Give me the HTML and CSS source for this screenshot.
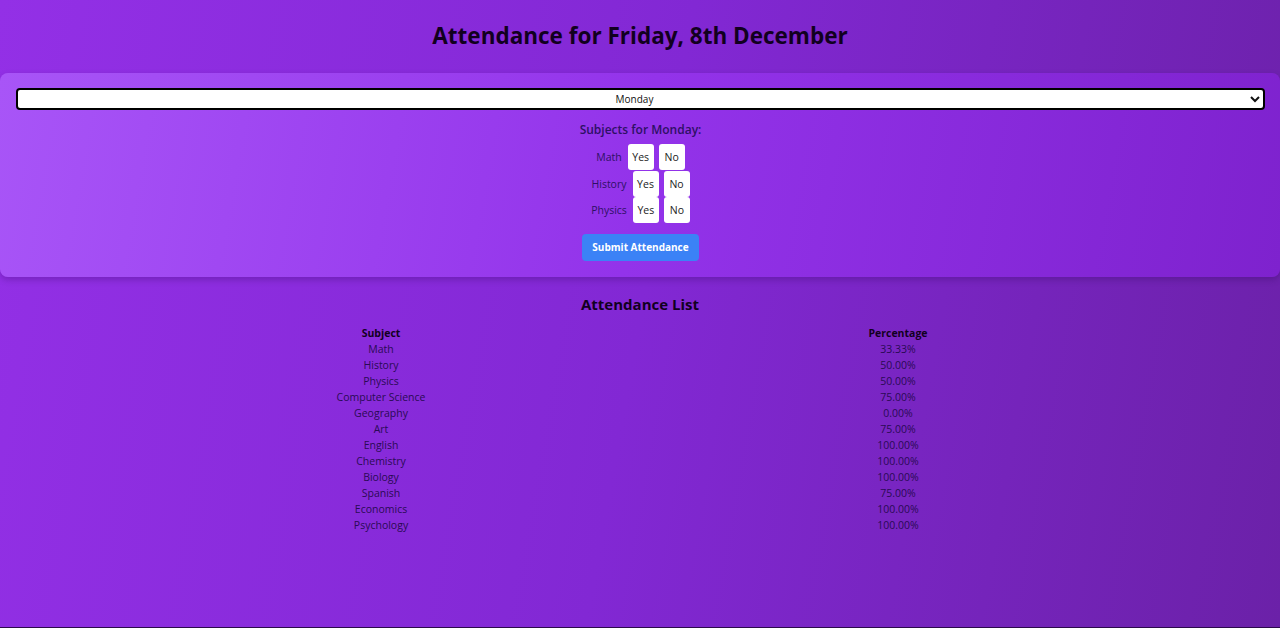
FILE: index.html
```html
<!DOCTYPE html>
<html lang="en">
<head>
<meta charset="utf-8">
<title>Attendance</title>
<link rel="stylesheet" href="styles.css">
</head>
<body>
<div class="page">
  <h1 class="title">Attendance for Friday, 8th December</h1>
  <section class="card">
    <select class="day-select">
      <option selected>Monday</option>
      <option>Tuesday</option>
      <option>Wednesday</option>
      <option>Thursday</option>
      <option>Friday</option>
    </select>
    <h2 class="subtitle">Subjects for Monday:</h2>
    <div class="rows">
      <div class="row"><span class="label">Math</span><button class="opt">Yes</button><button class="opt">No</button></div>
      <div class="row"><span class="label">History</span><button class="opt">Yes</button><button class="opt">No</button></div>
      <div class="row"><span class="label">Physics</span><button class="opt">Yes</button><button class="opt">No</button></div>
    </div>
    <button class="submit">Submit Attendance</button>
  </section>
  <h2 class="list-title">Attendance List</h2>
  <table class="list">
    <thead>
      <tr><th class="col-subject">Subject</th><th>Percentage</th></tr>
    </thead>
    <tbody>
      <tr><td>Math</td><td>33.33%</td></tr>
      <tr><td>History</td><td>50.00%</td></tr>
      <tr><td>Physics</td><td>50.00%</td></tr>
      <tr><td>Computer Science</td><td>75.00%</td></tr>
      <tr><td>Geography</td><td>0.00%</td></tr>
      <tr><td>Art</td><td>75.00%</td></tr>
      <tr><td>English</td><td>100.00%</td></tr>
      <tr><td>Chemistry</td><td>100.00%</td></tr>
      <tr><td>Biology</td><td>100.00%</td></tr>
      <tr><td>Spanish</td><td>75.00%</td></tr>
      <tr><td>Economics</td><td>100.00%</td></tr>
      <tr><td>Psychology</td><td>100.00%</td></tr>
    </tbody>
  </table>
</div>
</body>
</html>
```

FILE: styles.css
```css
* { box-sizing: border-box; }

html, body {
  margin: 0;
  padding: 0;
}

body {
  font-family: "Open Sans", "Noto Sans", sans-serif;
  background: linear-gradient(100deg, #9330e6 0%, #8228d4 50%, #6b21a8 100%);
  min-height: 628px;
  border-bottom: 1px solid #2a0a4a;
  color: #2e1065;
}

.page {
  display: flex;
  flex-direction: column;
  align-items: center;
}

.title {
  margin: 0;
  padding: 20px 0 21px;
  font-size: 22.5px;
  line-height: 32px;
  font-weight: 700;
  color: #12001f;
}

.card {
  width: 100%;
  border-radius: 8px;
  background: linear-gradient(100deg, #a855f7 0%, #9333ea 50%, #7e22ce 100%);
  box-shadow: 0 3px 6px rgba(40, 0, 80, 0.25);
  padding: 15px 15px 16px 16px;
  display: flex;
  flex-direction: column;
  align-items: center;
}

.day-select {
  width: 100%;
  height: 22px;
  border: 2px solid #000;
  border-radius: 4px;
  background: #fff;
  font-family: "Open Sans", sans-serif;
  font-size: 10px;
  text-align: center;
  text-align-last: center;
  color: #111;
  margin: 0 0 9px;
}

.subtitle {
  margin: 0 0 4px;
  font-size: 12px;
  line-height: 21px;
  font-weight: 600;
  color: #2e1065;
}

.rows {
  display: flex;
  flex-direction: column;
  align-items: center;
}

.row {
  display: flex;
  align-items: center;
  gap: 5px;
  height: 26.5px;
}

.label {
  font-size: 10.5px;
  color: #2e1065;
  margin-right: 1px;
}

.opt {
  width: 26px;
  height: 26px;
  padding: 0;
  border: none;
  border-radius: 3px;
  background: #fff;
  font-family: "Open Sans", sans-serif;
  font-size: 10.5px;
  color: #222;
}

.submit {
  margin-top: 10px;
  height: 27px;
  width: 117px;
  padding: 0;
  border: none;
  border-radius: 4px;
  background: #3b82f6;
  color: #fff;
  font-family: "Open Sans", sans-serif;
  font-size: 10px;
  font-weight: 700;
}

.list-title {
  margin: 15px 0 9px;
  font-size: 15px;
  line-height: 24px;
  font-weight: 700;
  color: #12001f;
}

.list {
  width: 1034px;
  table-layout: fixed;
  border-collapse: collapse;
  font-size: 10.5px;
}

.col-subject { width: 516px; }

.list th,
.list td {
  padding: 0;
  height: 16px;
  line-height: 16px;
  text-align: center;
}

.list th {
  font-weight: 700;
  color: #12001f;
}

.list td {
  color: #2a0a55;
}
```
